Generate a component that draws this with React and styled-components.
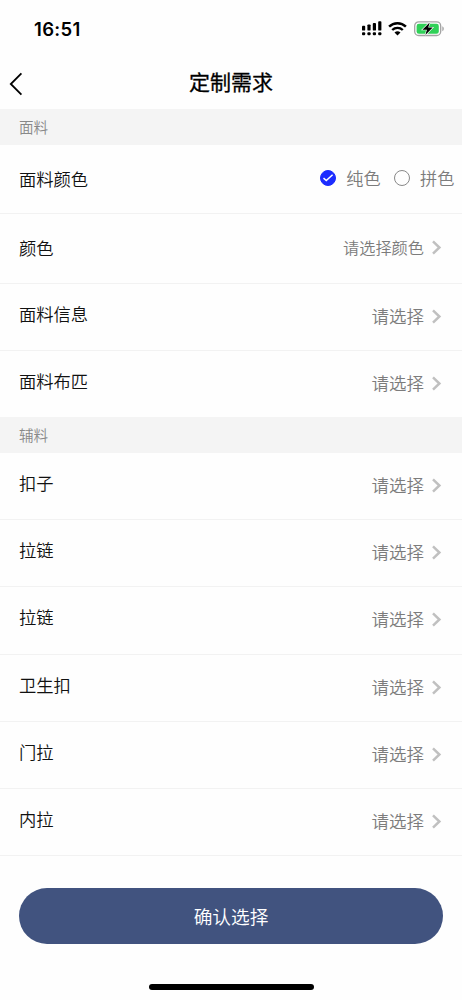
import { useState } from "react";
import styled, { createGlobalStyle } from "styled-components";

const fabricRows = [
  { id: "info", label: "面料信息" },
  { id: "cloth", label: "面料布匹" },
];

const accessoryRows = [
  { id: "button", label: "扣子" },
  { id: "zip-1", label: "拉链" },
  { id: "zip-2", label: "拉链" },
  { id: "hygiene", label: "卫生扣" },
  { id: "door", label: "门拉" },
  { id: "inner", label: "内拉" },
];

function SignalIcon() {
  return (
    <svg width="20" height="15" viewBox="0 0 20 15">
      <rect x="0" y="4.8" width="3.2" height="4.8" rx="0.9" />
      <rect x="5.4" y="3.4" width="3.2" height="6.2" rx="0.9" />
      <rect x="10.8" y="2" width="3.2" height="7.6" rx="0.9" />
      <rect x="16.2" y="0.2" width="3.2" height="9.4" rx="0.9" />
      <rect x="0" y="11.2" width="3.2" height="3" rx="1" />
      <rect x="5.4" y="11.2" width="3.2" height="3" rx="1" />
      <rect x="10.8" y="11.2" width="3.2" height="3" rx="1" />
      <rect x="16.2" y="11.2" width="3.2" height="3" rx="1" />
    </svg>
  );
}

function WifiIcon() {
  return (
    <svg width="19" height="14" viewBox="0 0 19 14" fill="none" stroke="#000">
      <path d="M1.1 4.7a12 12 0 0 1 16.8 0" strokeWidth="2.5" />
      <path d="M4.2 8a7.6 7.6 0 0 1 10.6 0" strokeWidth="2.4" />
      <path
        d="M9.5 13.6 6.5 10.6a4.3 4.3 0 0 1 6 0z"
        fill="#000"
        stroke="none"
      />
    </svg>
  );
}

function BatteryIcon() {
  return (
    <svg width="31" height="16" viewBox="0 0 31 16">
      <rect
        x="0.7"
        y="0.9"
        width="26"
        height="13.6"
        rx="4"
        fill="#fff"
        stroke="#a3a3a3"
        strokeWidth="1.3"
      />
      <rect x="2.6" y="2.7" width="22.2" height="10" rx="2.3" fill="#30d158" />
      <path d="M28.3 5.3c2 .7 2 4.1 0 4.9z" fill="#a3a3a3" />
      <path
        d="M15.7 1.4 8.4 8.7h4.5L11.4 14l7.3-7.4h-4.5z"
        fill="#000"
        stroke="#fff"
        strokeWidth="1.2"
        paintOrder="stroke"
      />
    </svg>
  );
}

function Chevron() {
  return (
    <ChevronSvg width="11" height="16" viewBox="0 0 11 16">
      <path d="M2 1.3 8.4 7.5 2 13.7" />
    </ChevronSvg>
  );
}

function RadioOption({ label, checked, onSelect }) {
  return (
    <Option type="button" role="radio" aria-checked={checked} onClick={onSelect}>
      <Radio $checked={checked}>
        {checked && (
          <svg width="12" height="10" viewBox="0 0 12 10">
            <path
              d="M1.5 5.1 4.3 7.6 10.6 1.7"
              fill="none"
              stroke="#fff"
              strokeWidth="1.5"
            />
          </svg>
        )}
      </Radio>
      <span>{label}</span>
    </Option>
  );
}

function SelectRow({ label }) {
  return (
    <Row>
      <Label $raised>{label}</Label>
      <Value>
        <span>请选择</span>
        <Chevron />
      </Value>
    </Row>
  );
}

export default function App() {
  const [colorMode, setColorMode] = useState("solid");

  return (
    <>
      <GlobalStyle />

      <Screen>
        <StatusBar>
          <Time>16:51</Time>
          <StatusIcons>
            <SignalIcon />
            <WifiIcon />
            <BatteryIcon />
          </StatusIcons>
        </StatusBar>

        <NavBar>
          <BackButton type="button" aria-label="返回">
            <svg width="14" height="24" viewBox="0 0 14 24">
              <path
                d="M12.4 1.4 1.8 12l10.6 10.6"
                fill="none"
                stroke="#000"
                strokeWidth="1.8"
              />
            </svg>
          </BackButton>
          <Title>定制需求</Title>
        </NavBar>

        <SectionTitle>面料</SectionTitle>
        <Row $height={69}>
          <Label>面料颜色</Label>
          <Options role="radiogroup">
            <RadioOption
              label="纯色"
              checked={colorMode === "solid"}
              onSelect={() => setColorMode("solid")}
            />
            <RadioOption
              label="拼色"
              checked={colorMode === "mixed"}
              onSelect={() => setColorMode("mixed")}
            />
          </Options>
        </Row>
        <Row $height={69.6}>
          <Label>颜色</Label>
          <Value $small>
            <span>请选择颜色</span>
            <Chevron />
          </Value>
        </Row>
        {fabricRows.map((row) => (
          <SelectRow key={row.id} label={row.label} />
        ))}

        <SectionTitle>辅料</SectionTitle>
        {accessoryRows.map((row) => (
          <SelectRow key={row.id} label={row.label} />
        ))}

        <Footer>
          <ConfirmButton type="button">确认选择</ConfirmButton>
          <HomeIndicator />
        </Footer>
      </Screen>
    </>
  );
}

const GlobalStyle = createGlobalStyle`
  * {
    box-sizing: border-box;
  }

  body {
    margin: 0;
    background: #fefefe;
  }

  button {
    padding: 0;
    border: 0;
    background: none;
    color: inherit;
    font: inherit;
  }
`;

const Screen = styled.main`
  display: flex;
  flex-direction: column;
  width: 462px;
  height: 1000px;
  overflow: hidden;

  background: #fefefe;
  color: #111;
  font-family: "Noto Sans CJK SC", sans-serif;
  font-weight: 350;
`;

const StatusBar = styled.header`
  display: flex;
  justify-content: space-between;
  align-items: center;
  height: 57px;
  padding: 0 17.5px 0 34px;
`;

const Time = styled.span`
  color: #000;
  font-family: Inter, sans-serif;
  font-size: 18.5px;
  font-weight: 600;
  letter-spacing: 0.35px;
`;

const StatusIcons = styled.div`
  display: flex;
  align-items: center;
  gap: 6.5px;
`;

const NavBar = styled.nav`
  display: grid;
  grid-template-columns: 40px 1fr 40px;
  align-items: center;
  height: 52px;
`;

const BackButton = styled.button`
  display: flex;
  padding: 1px 0 0 9px;
`;

const Title = styled.h1`
  margin: 0;
  padding-bottom: 4px;

  color: #000;
  font-size: 21px;
  font-weight: 400;
  line-height: 30px;
  text-align: center;
  -webkit-text-stroke: 0.3px #000;
`;

const SectionTitle = styled.h2`
  flex: none;
  height: 36px;
  margin: 0;
  padding-left: 19px;

  background: #f4f4f4;
  color: #888;
  font-size: 14.6px;
  font-weight: 350;
  line-height: 35px;
`;

const Row = styled.div`
  flex: none;
  display: flex;
  justify-content: space-between;
  align-items: center;
  height: ${({ $height }) => $height ?? 67.2}px;
  padding-left: 19px;

  border-bottom: 1px solid #f2f2f2;

  &:has(+ h2) {
    height: 66.2px;
    border-bottom: 0;
  }
`;

const Label = styled.span`
  padding-bottom: ${({ $raised }) => ($raised ? 6 : 1)}px;

  font-size: 17.3px;
  line-height: 24px;
`;

const Value = styled.span`
  display: flex;
  align-items: center;
  gap: 7px;
  padding-right: 20px;

  color: #7c7c7c;
  font-size: ${({ $small }) => ($small ? 16.2 : 17.5)}px;
  line-height: 24px;

  > span {
    padding-bottom: 2px;
  }
`;

const ChevronSvg = styled.svg`
  fill: none;
  stroke: #c0c0c0;
  stroke-width: 2.5;
`;

const Options = styled.div`
  display: flex;
  gap: 13px;
  padding: 0 7.5px 2px 0;
`;

const Option = styled.button`
  display: flex;
  align-items: center;
  gap: 10px;

  color: #7c7c7c;
  font-size: 17.2px;
  line-height: 24px;
`;

const Radio = styled.span`
  display: flex;
  justify-content: center;
  align-items: center;
  width: 16.5px;
  height: 16.5px;

  border: 1px solid ${({ $checked }) => ($checked ? "#1c2cff" : "#888")};
  border-radius: 50%;
  background: ${({ $checked }) => ($checked ? "#1c2cff" : "transparent")};
`;

const Footer = styled.footer`
  flex: 1;
  display: flex;
  flex-direction: column;
  justify-content: space-between;
  align-items: center;
  padding: 32px 19px 10px;
`;

const ConfirmButton = styled.button`
  width: 100%;
  height: 56px;

  border-radius: 28px;
  background: #41537f;
  color: #fff;
  font-size: 18.7px;
  line-height: 56px;
`;

const HomeIndicator = styled.div`
  width: 165px;
  height: 6px;

  border-radius: 3px;
  background: #000;
`;
